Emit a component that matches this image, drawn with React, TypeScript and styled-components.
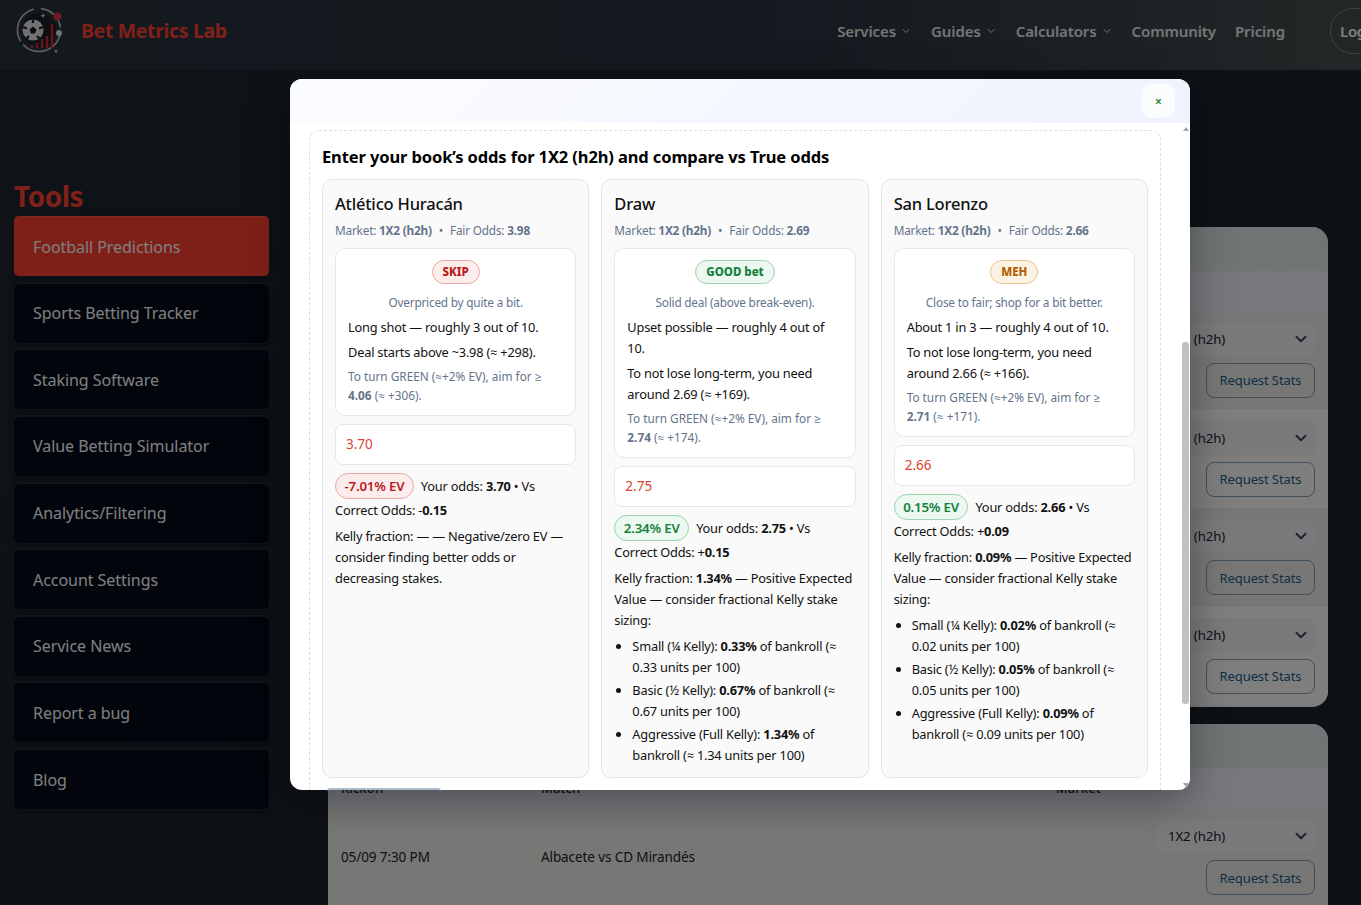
import React from 'react';
import styled, { createGlobalStyle } from 'styled-components';
import { ChevronDown } from 'lucide-react';

type Tone = 'red' | 'green' | 'amber';

type KellySize = { label: string, pct: string, units: string }

type Outcome = {
  name: string
  fair: string
  tone: Tone
  badge: string
  note: string
  lines: string[]
  greenAt: string
  greenRest: string
  odds: string
  ev: string
  edgeSign: string
  edge: string
  kellyHead: string
  kellyText: string
  sizes: KellySize[]
}

const outcomes: Outcome[] = [
  {
    name: 'Atlético Huracán',
    fair: '3.98',
    tone: 'red',
    badge: 'SKIP',
    note: 'Overpriced by quite a bit.',
    lines: ['Long shot — roughly 3 out of 10.', 'Deal starts above ~3.98 (≈ +298).'],
    greenAt: '4.06',
    greenRest: ' (≈ +306).',
    odds: '3.70',
    ev: '-7.01% EV',
    edgeSign: '-',
    edge: '0.15',
    kellyHead: '—',
    kellyText: ' — Negative/zero EV — consider finding better odds or decreasing stakes.',
    sizes: [],
  },
  {
    name: 'Draw',
    fair: '2.69',
    tone: 'green',
    badge: 'GOOD bet',
    note: 'Solid deal (above break-even).',
    lines: ['Upset possible — roughly 4 out of 10.', 'To not lose long-term, you need around 2.69 (≈ +169).'],
    greenAt: '2.74',
    greenRest: ' (≈ +174).',
    odds: '2.75',
    ev: '2.34% EV',
    edgeSign: '+',
    edge: '0.15',
    kellyHead: '1.34%',
    kellyText: ' — Positive Expected Value — consider fractional Kelly stake sizing:',
    sizes: [
      { label: 'Small (¼ Kelly): ', pct: '0.33%', units: ' of bankroll (≈ 0.33 units per 100)' },
      { label: 'Basic (½ Kelly): ', pct: '0.67%', units: ' of bankroll (≈ 0.67 units per 100)' },
      { label: 'Aggressive (Full Kelly): ', pct: '1.34%', units: ' of bankroll (≈ 1.34 units per 100)' },
    ],
  },
  {
    name: 'San Lorenzo',
    fair: '2.66',
    tone: 'amber',
    badge: 'MEH',
    note: 'Close to fair; shop for a bit better.',
    lines: ['About 1 in 3 — roughly 4 out of 10.', 'To not lose long-term, you need around 2.66 (≈ +166).'],
    greenAt: '2.71',
    greenRest: ' (≈ +171).',
    odds: '2.66',
    ev: '0.15% EV',
    edgeSign: '+',
    edge: '0.09',
    kellyHead: '0.09%',
    kellyText: ' — Positive Expected Value — consider fractional Kelly stake sizing:',
    sizes: [
      { label: 'Small (¼ Kelly): ', pct: '0.02%', units: ' of bankroll (≈ 0.02 units per 100)' },
      { label: 'Basic (½ Kelly): ', pct: '0.05%', units: ' of bankroll (≈ 0.05 units per 100)' },
      { label: 'Aggressive (Full Kelly): ', pct: '0.09%', units: ' of bankroll (≈ 0.09 units per 100)' },
    ],
  },
];

const tools = [
  'Football Predictions',
  'Sports Betting Tracker',
  'Staking Software',
  'Value Betting Simulator',
  'Analytics/Filtering',
  'Account Settings',
  'Service News',
  'Report a bug',
  'Blog',
];

const toneColors = {
  red: { text: '#b91c1c', bg: '#fdecec', border: '#e8a9a5' },
  green: { text: '#15803d', bg: '#ecf8f0', border: '#9ed3b1' },
  amber: { text: '#b45f06', bg: '#fdf3e4', border: '#e9c48c' },
};

const Logo = () => (
  <svg width="50" height="50" viewBox="0 0 50 50">
    <circle cx="24" cy="24" r="21.5" fill="none" stroke="#c4c8ca" strokeWidth="1.6" strokeDasharray="29 4 50 4 40 8" transform="rotate(-85 24 24)" />
    <circle cx="24" cy="24" r="17" fill="#1c2228" />
    <circle cx="18" cy="24" r="10.5" fill="#e4e4e4" />
    <polygon points="18,20.5 21.5,23.5 20,27.5 16,27.5 14.5,23.5" fill="#14181c" />
    <path d="M18 13.5 v3.5 M8 21 l4 1.5 M28 21 l-4 1.5 M11 33 l3-3 M25 33 l-3-3" stroke="#14181c" strokeWidth="2.2" />
    <path d="M17 42 v-3 M22 42 v-5 M27 42 v-9 M32 42 v-12 M37 42 v-24" stroke="#d8243c" strokeWidth="2.2" />
    <path d="M28 7 l.7 2 2 .7 -2 .7 -.7 2 -.7-2 -2-.7 2-.7z M41 43 l.6 1.6 1.6.6 -1.6.6 -.6 1.6 -.6-1.6 -1.6-.6 1.6-.6z" fill="#d8dcde" />
    <circle cx="42.5" cy="10.5" r="4" fill="#e0304a" />
    <circle cx="44" cy="27" r="3" fill="#dfe2e4" />
  </svg>
);

const App = () => {
  return (
    <>
      <GlobalStyle />
      <Page>
        <TopBar>
          <Brand>
            <Logo />
            <BrandName>Bet Metrics Lab</BrandName>
          </Brand>
          <Nav>
            <NavLink>Services <ChevronDown size={12} /></NavLink>
            <NavLink>Guides <ChevronDown size={12} /></NavLink>
            <NavLink>Calculators <ChevronDown size={12} /></NavLink>
            <NavLink>Community</NavLink>
            <NavLink>Pricing</NavLink>
            <LoginButton>Log in</LoginButton>
          </Nav>
        </TopBar>
        <Columns>
          <Sidebar>
            <ToolsTitle>Tools</ToolsTitle>
            {tools.map((tool, i) => (
              <ToolItem key={tool} $active={i === 0}>{tool}</ToolItem>
            ))}
          </Sidebar>
          <Main>
            <TableCard>
              <CardTop />
              <TableHead />
              {[0, 1, 2, 3].map(i => (
                <Row key={i} $alt={i % 2 === 1}>
                  <Kickoff />
                  <Match />
                  <Actions>
                    <MarketSelect>1X2 (h2h)<ChevronDown size={18} strokeWidth={2.6} /></MarketSelect>
                    <StatsButton>Request Stats</StatsButton>
                  </Actions>
                </Row>
              ))}
            </TableCard>
            <TableCard>
              <CardTop />
              <TableHead>
                <Kickoff>Kickoff</Kickoff>
                <Match>Match</Match>
                <MarketHead>Market</MarketHead>
              </TableHead>
              <Row>
                <Kickoff>05/09 7:30 PM</Kickoff>
                <Match>Albacete vs CD Mirandés</Match>
                <Actions>
                  <MarketSelect>1X2 (h2h)<ChevronDown size={18} strokeWidth={2.6} /></MarketSelect>
                  <StatsButton>Request Stats</StatsButton>
                </Actions>
              </Row>
            </TableCard>
          </Main>
        </Columns>
        <Overlay>
          <Modal>
            <ModalHeader>
              <CloseButton>×</CloseButton>
            </ModalHeader>
            <ModalBody>
              <OddsPanel>
                <PanelTitle>Enter your book’s odds for 1X2 (h2h) and compare vs True odds</PanelTitle>
                <OutcomeGrid>
                  {outcomes.map(o => (
                    <OutcomeCard key={o.name}>
                      <OutcomeName>{o.name}</OutcomeName>
                      <MarketLine>
                        Market: <b>1X2 (h2h)</b><Dot>•</Dot>Fair Odds: <b>{o.fair}</b>
                      </MarketLine>
                      <VerdictBox>
                        <Badge $tone={o.tone}>{o.badge}</Badge>
                        <VerdictNote>{o.note}</VerdictNote>
                        {o.lines.map(line => <VerdictLine key={line}>{line}</VerdictLine>)}
                        <GreenHint>To turn GREEN (≈+2% EV), aim for ≥ <b>{o.greenAt}</b>{o.greenRest}</GreenHint>
                      </VerdictBox>
                      <OddsInput readOnly value={o.odds} />
                      <EvLine>
                        <EvPill $tone={o.tone === 'red' ? 'red' : 'green'}>{o.ev}</EvPill>
                        Your odds: <b>{o.odds}</b> • Vs Correct Odds: {o.edgeSign}<b>{o.edge}</b>
                      </EvLine>
                      <KellyText>Kelly fraction: {o.tone === 'red' ? o.kellyHead : <b>{o.kellyHead}</b>}{o.kellyText}</KellyText>
                      {o.sizes.length > 0 && (
                        <KellyList>
                          {o.sizes.map(s => (
                            <li key={s.label}>{s.label}<b>{s.pct}</b>{s.units}</li>
                          ))}
                        </KellyList>
                      )}
                    </OutcomeCard>
                  ))}
                </OutcomeGrid>
              </OddsPanel>
              <ScrollTrack>
                <ArrowUp />
                <ScrollThumb />
                <ArrowDown />
              </ScrollTrack>
            </ModalBody>
          </Modal>
          <PeekEdge />
        </Overlay>
      </Page>
    </>
  )
}

const GlobalStyle = createGlobalStyle`
  html, body {
    margin: 0;
    padding: 0;
    height: 100%;
    overflow: hidden;
    background: #1e2832;
  }
  * {
    box-sizing: border-box;
  }
  body {
    font-family: "Noto Sans", "Open Sans", sans-serif;
  }
`

const Page = styled.div`
  position: relative;
  width: 1361px;
  height: 905px;
  overflow: hidden;
  background: linear-gradient(135deg, #1e2731, #19222c);
`

const TopBar = styled.header`
  display: flex;
  align-items: center;
  justify-content: space-between;
  height: 70px;
  padding: 0 0 9px 15px;
  background: linear-gradient(90deg, #26323b 0%, #28353f 60%, #45504f 100%);
`

const Brand = styled.div`
  display: flex;
  align-items: center;
  gap: 16px;
`

const BrandName = styled.span`
  font-size: 19.5px;
  font-weight: 700;
  letter-spacing: -0.35px;
  color: #ff4033;
`

const Nav = styled.nav`
  display: flex;
  align-items: center;
  gap: 19px;
  margin-right: -61px;
`

const NavLink = styled.a`
  display: flex;
  align-items: center;
  gap: 4px;
  font-size: 15px;
  font-weight: 600;
  letter-spacing: -0.1px;
  color: #fff;
  opacity: 0.9;
`

const LoginButton = styled.button`
  height: 46px;
  width: 92px;
  margin-left: 26px;
  border: 1px solid rgba(255, 255, 255, 0.3);
  border-radius: 23px;
  background: transparent;
  color: #fff;
  font: 600 15px "Noto Sans", sans-serif;
  letter-spacing: -0.3px;
  text-align: left;
  padding-left: 9px;
`

const Columns = styled.div`
  display: flex;
  padding-left: 14px;
`

const Sidebar = styled.aside`
  display: flex;
  flex-direction: column;
  gap: 6.65px;
  width: 255px;
  padding-top: 107px;
`

const ToolsTitle = styled.h2`
  margin: 0 0 -5.65px;
  font-size: 28px;
  line-height: 38px;
  font-weight: 700;
  letter-spacing: -0.5px;
  color: #ff4033;
`

const ToolItem = styled.div<{ $active?: boolean }>`
  display: flex;
  align-items: center;
  height: 60px;
  padding: 1px 0 0 19px;
  border-radius: 5px;
  font-size: 16px;
  letter-spacing: -0.05px;
  color: #fff;
  background: ${props => props.$active ? '#fe4030' : '#040c18'};
  box-shadow: inset 0 1px 0 rgba(255, 255, 255, 0.12), 0 0 0 1px rgba(255, 255, 255, 0.04), 0 2px 6px rgba(0, 0, 0, 0.4);
`

const Main = styled.main`
  display: flex;
  flex-direction: column;
  gap: 17.5px;
  width: 1000px;
  margin-left: 59px;
  padding-top: 157px;
`

const TableCard = styled.section`
  border-radius: 16px 16px 0 0;
  overflow: hidden;
  padding-bottom: 1.5px;
  background: #f4f4f6;
  &:first-child {
    border-radius: 16px;
  }
`

const CardTop = styled.div`
  height: 43.5px;
  background: linear-gradient(90deg, #dfeaea, #e0e9e9);
`

const TableHead = styled.div`
  display: flex;
  align-items: center;
  height: 40px;
  padding-left: 13px;
  font-size: 12.8px;
  font-weight: 600;
  color: #333;
  background: #eef0f8;
`

const MarketHead = styled.div`
  margin-left: auto;
  margin-right: 227px;
`

const Row = styled.div<{ $alt?: boolean }>`
  display: flex;
  align-items: center;
  height: 98.7px;
  padding: 0 13px;
  font-size: 13.5px;
  letter-spacing: -0.1px;
  color: #222;
  background: ${props => props.$alt ? '#fdfdfe' : '#eeeeec'};
`

const Kickoff = styled.div`
  width: 200px;
`

const Match = styled.div`
  flex: 1;
`

const Actions = styled.div`
  display: flex;
  flex-direction: column;
  align-items: flex-end;
  gap: 7px;
`

const MarketSelect = styled.div`
  display: flex;
  align-items: center;
  justify-content: space-between;
  width: 160px;
  height: 34px;
  padding: 0 4px 0 12px;
  border: 1px solid #eeeef8;
  border-radius: 8px;
  font-size: 13.2px;
  color: #222;
  background: #f4f4fa;
  & svg {
    color: #3c4656;
  }
`

const StatsButton = styled.button`
  height: 35px;
  width: 109px;
  padding: 0;
  border: 1px solid #7f9fb8;
  border-radius: 8px;
  background: transparent;
  color: #1f5f8b;
  font: 13px "Noto Sans", sans-serif;
  letter-spacing: -0.1px;
`

const Overlay = styled.div`
  position: absolute;
  inset: 0;
  padding: 79px 0 0 290px;
  background: rgba(0, 0, 0, 0.5);
`

const Modal = styled.div`
  display: flex;
  flex-direction: column;
  width: 900px;
  height: 710.5px;
  overflow: hidden;
  border-radius: 12px;
  background: #fff;
  box-shadow: 0 10px 40px rgba(0, 0, 0, 0.35);
`

const PeekEdge = styled.div`
  position: absolute;
  left: 327px;
  top: 788px;
  width: 114px;
  height: 3px;
  border-top: 2px solid #a9bccd;
  border-radius: 6px 6px 0 0;
`

const ModalHeader = styled.div`
  display: flex;
  flex: none;
  justify-content: flex-end;
  height: 44px;
  padding: 5px 15px 0 0;
  background: linear-gradient(135deg, #fbfcff, #eef3fe);
`

const CloseButton = styled.button`
  width: 33px;
  height: 34px;
  border: none;
  border-radius: 9px;
  background: #fbfcfe;
  color: #2e8b3e;
  font: 700 12px "Noto Sans", sans-serif;
`

const ModalBody = styled.div`
  position: relative;
  flex: 1;
  overflow: hidden;
  padding: 7px 0 0 19px;
`

const ScrollTrack = styled.div`
  position: absolute;
  top: 0;
  right: 0;
  bottom: 0;
  display: flex;
  flex-direction: column;
  align-items: center;
  width: 9px;
  background: #fff;
`

const ArrowUp = styled.div`
  margin-top: 4px;
  border-left: 3px solid transparent;
  border-right: 3px solid transparent;
  border-bottom: 4px solid #a3a3a3;
`

const ScrollThumb = styled.div`
  width: 7px;
  height: 362px;
  margin-top: 211px;
  border-radius: 3px;
  background: #c1c1c1;
`

const ArrowDown = styled.div`
  margin-top: auto;
  margin-bottom: 3px;
  border-left: 3px solid transparent;
  border-right: 3px solid transparent;
  border-top: 4px solid #a3a3a3;
`

const OddsPanel = styled.div`
  width: 852px;
  height: 720px;
  padding: 15px 12px;
  border: 1px dashed #dedede;
  border-radius: 10px;
`

const PanelTitle = styled.h3`
  margin: 0 0 11px;
  font-size: 16.5px;
  line-height: 22px;
  font-weight: 700;
  letter-spacing: -0.12px;
  color: #000;
`

const OutcomeGrid = styled.div`
  display: grid;
  grid-template-columns: repeat(3, 1fr);
  gap: 12px;
`

const OutcomeCard = styled.div`
  padding: 12px 12px 11px;
  border: 1px solid #e4e4e4;
  border-radius: 10px;
  font-size: 12.8px;
  line-height: 21px;
  letter-spacing: -0.2px;
  color: #111;
  background: #fafafa;
`

const OutcomeName = styled.div`
  font-size: 16.5px;
  line-height: 24px;
  font-weight: 500;
  letter-spacing: -0.2px;
  color: #111;
`

const MarketLine = styled.div`
  margin: 4px 0 8px;
  font-size: 11.8px;
  line-height: 20px;
  color: #64748b;
`

const Dot = styled.span`
  margin: 0 7px;
`

const VerdictBox = styled.div`
  padding: 11px 12px 10px;
  border: 1px solid #e5e7eb;
  border-radius: 10px;
  background: #fff;
`

const Badge = styled.div<{ $tone: Tone }>`
  display: table;
  margin: 0 auto 8px;
  padding: 0 10px;
  height: 24px;
  border: 1px solid ${props => toneColors[props.$tone].border};
  border-radius: 12px;
  font-size: 11.5px;
  line-height: 22px;
  font-weight: 800;
  letter-spacing: 0;
  color: ${props => toneColors[props.$tone].text};
  background: ${props => toneColors[props.$tone].bg};
`

const VerdictNote = styled.div`
  margin-bottom: 5px;
  font-size: 11.8px;
  line-height: 20px;
  text-align: center;
  color: #64748b;
`

const VerdictLine = styled.div`
  margin-bottom: 4px;
`

const GreenHint = styled.div`
  font-size: 11.8px;
  line-height: 19px;
  letter-spacing: 0;
  color: #64748b;
`

const OddsInput = styled.input`
  display: block;
  width: 100%;
  height: 41px;
  margin: 8px 0;
  padding: 0 10px 2px;
  border: 1px solid #e5e7eb;
  border-radius: 8px;
  font: 13.5px "Noto Sans", sans-serif;
  color: #d9432f;
  background: #fff;
  outline: none;
`

const EvLine = styled.div`
  margin-bottom: 4px;
  line-height: 23px;
`

const EvPill = styled.span<{ $tone: Tone }>`
  display: inline-block;
  height: 26px;
  margin-right: 7px;
  padding: 0 8.5px;
  border: 1px solid ${props => toneColors[props.$tone].border};
  border-radius: 13px;
  font-size: 13.3px;
  line-height: 24px;
  font-weight: 600;
  color: ${props => toneColors[props.$tone].text};
  background: ${props => toneColors[props.$tone].bg};
`

const KellyText = styled.div`
  margin-bottom: 5px;
`

const KellyList = styled.ul`
  margin: 0;
  padding-left: 18px;
  & li {
    margin-bottom: 2px;
  }
  & li:last-child {
    margin-bottom: 0;
  }
`

export default App;
